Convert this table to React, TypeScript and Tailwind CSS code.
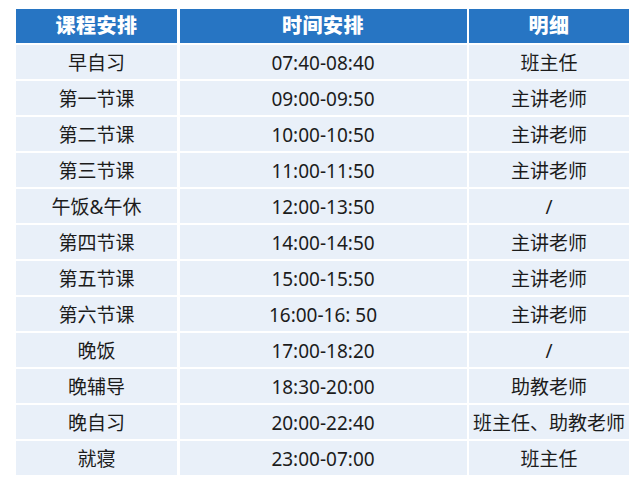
import React from "react";

const rows: [string, string, string][] = [
  ["早自习", "07:40-08:40", "班主任"],
  ["第一节课", "09:00-09:50", "主讲老师"],
  ["第二节课", "10:00-10:50", "主讲老师"],
  ["第三节课", "11:00-11:50", "主讲老师"],
  ["午饭&午休", "12:00-13:50", "/"],
  ["第四节课", "14:00-14:50", "主讲老师"],
  ["第五节课", "15:00-15:50", "主讲老师"],
  ["第六节课", "16:00-16: 50", "主讲老师"],
  ["晚饭", "17:00-18:20", "/"],
  ["晚辅导", "18:30-20:00", "助教老师"],
  ["晚自习", "20:00-22:40", "班主任、助教老师"],
  ["就寝", "23:00-07:00", "班主任"],
];

export default function App() {
  return (
    <div
      className="w-[641px] h-[482px] bg-white pt-[9px] pl-[16px]"
      style={{ fontFamily: '"Noto Sans", "Noto Sans CJK SC", sans-serif' }}
    >
      <div className="grid grid-cols-[161px_287px_160px] gap-x-[2.5px] gap-y-[2px] w-fit">
        {["课程安排", "时间安排", "明细"].map((h) => (
          <div
            key={h}
            className="h-[34px] bg-[#2775c3] text-white font-black text-[20px] flex items-center justify-center tracking-[0.5px]"
          >
            {h}
          </div>
        ))}
        {rows.map((r, i) => (
          <React.Fragment key={i}>
            {r.map((c, j) => (
              <div
                key={j}
                className="h-[34px] bg-[#e9f0f9] text-[#1c1c1c] text-[19px] flex items-center justify-center pt-[2px]"
              >
                {c}
              </div>
            ))}
          </React.Fragment>
        ))}
      </div>
    </div>
  );
}
